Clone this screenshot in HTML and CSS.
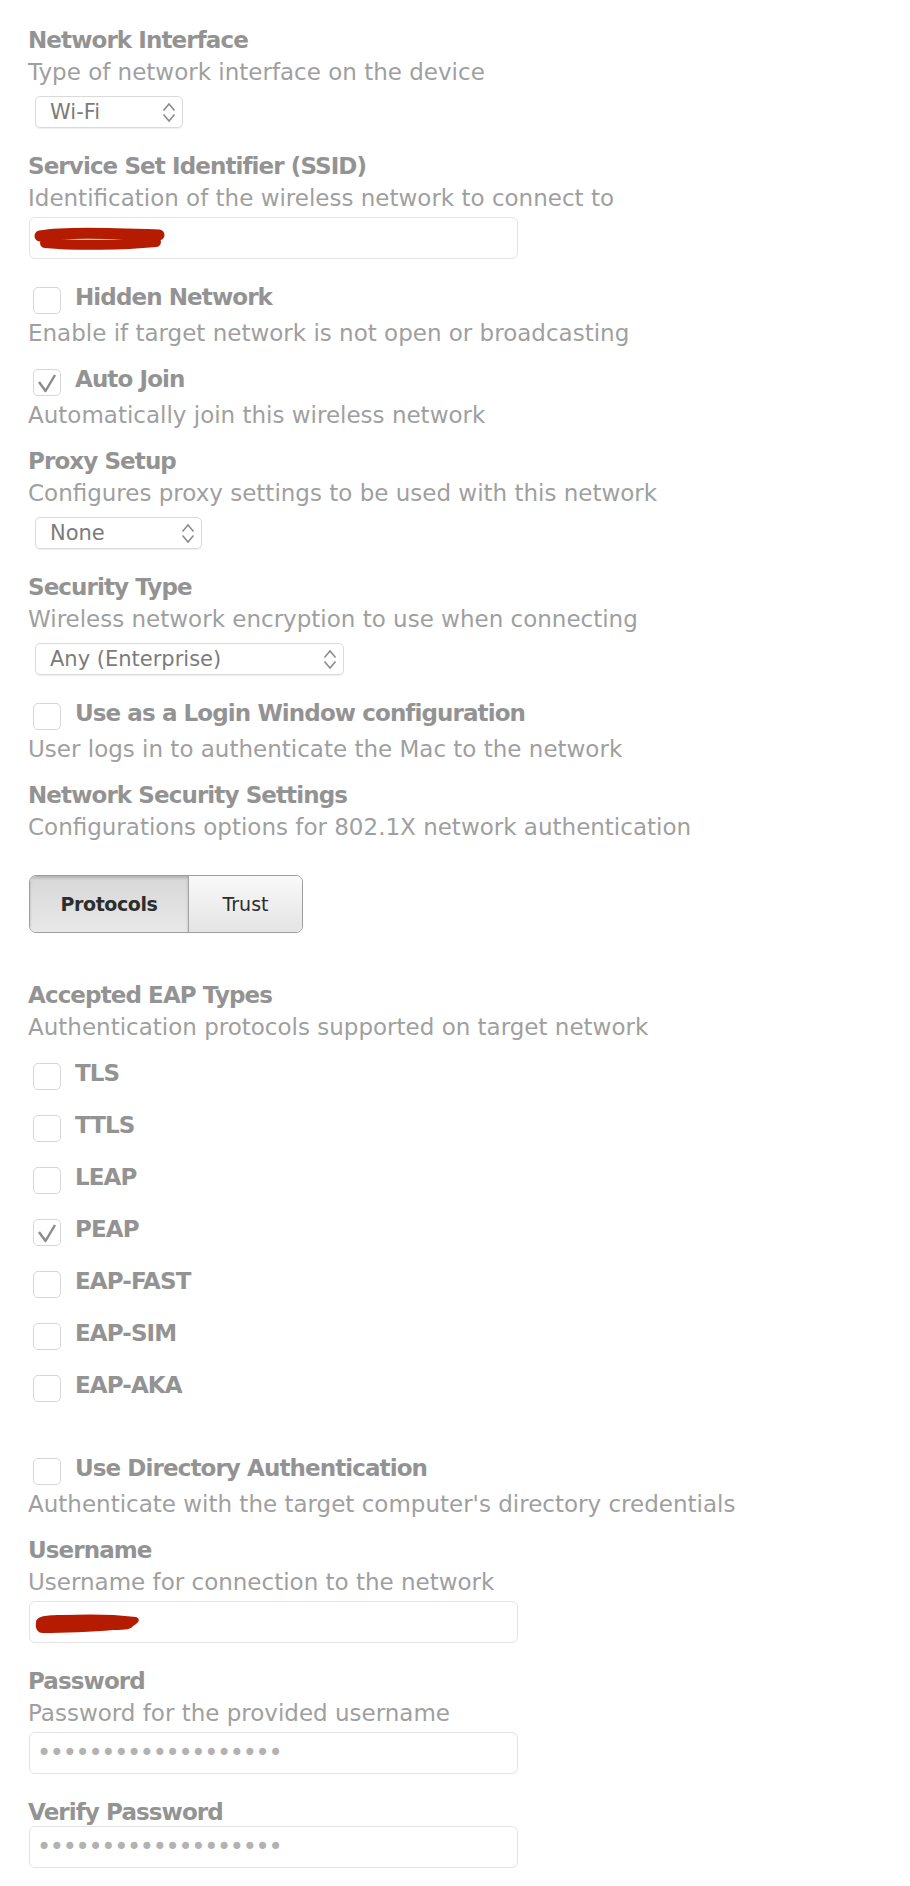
FILE: index.html
```html
<!DOCTYPE html>
<html lang="en">
<head>
  <meta charset="UTF-8">
  <title>Network Payload</title>
  <link rel="stylesheet" href="styles.css">
</head>
<body>

  <div class="field">
    <div class="field-title">Network Interface</div>
    <div class="field-desc">Type of network interface on the device</div>
    <div class="select-box select-small">
      <span>Wi-Fi</span>
      <svg class="arrows" width="14" height="21" viewBox="0 0 14 21"><path d="M1.5 8.5 L7 2 L12.5 8.5 M1.5 12.5 L7 19 L12.5 12.5"/></svg>
    </div>
  </div>

  <div class="field">
    <div class="field-title">Service Set Identifier (SSID)</div>
    <div class="field-desc">Identification of the wireless network to connect to</div>
    <div class="textbox">
      <svg class="redact" width="132" height="34" viewBox="0 0 132 34">
        <path d="M7 15 C30 11 70 12 126 14" stroke-width="11"/>
        <path d="M12 22 C45 25 90 24 123 21" stroke-width="10"/>
      </svg>
    </div>
  </div>

  <div class="field">
    <div class="check-row">
      <span class="checkbox"></span>
      <span class="check-label">Hidden Network</span>
    </div>
    <div class="field-desc">Enable if target network is not open or broadcasting</div>
  </div>

  <div class="field">
    <div class="check-row">
      <span class="checkbox"><svg viewBox="0 0 26 25"><path d="M5 12 L11.5 21 L21 5"/></svg></span>
      <span class="check-label">Auto Join</span>
    </div>
    <div class="field-desc">Automatically join this wireless network</div>
  </div>

  <div class="field">
    <div class="field-title">Proxy Setup</div>
    <div class="field-desc">Configures proxy settings to be used with this network</div>
    <div class="select-box select-medium">
      <span>None</span>
      <svg class="arrows" width="14" height="21" viewBox="0 0 14 21"><path d="M1.5 8.5 L7 2 L12.5 8.5 M1.5 12.5 L7 19 L12.5 12.5"/></svg>
    </div>
  </div>

  <div class="field">
    <div class="field-title">Security Type</div>
    <div class="field-desc">Wireless network encryption to use when connecting</div>
    <div class="select-box select-wide">
      <span>Any (Enterprise)</span>
      <svg class="arrows" width="14" height="21" viewBox="0 0 14 21"><path d="M1.5 8.5 L7 2 L12.5 8.5 M1.5 12.5 L7 19 L12.5 12.5"/></svg>
    </div>
  </div>

  <div class="field">
    <div class="check-row">
      <span class="checkbox"></span>
      <span class="check-label">Use as a Login Window configuration</span>
    </div>
    <div class="field-desc">User logs in to authenticate the Mac to the network</div>
  </div>

  <div class="field">
    <div class="field-title">Network Security Settings</div>
    <div class="field-desc">Configurations options for 802.1X network authentication</div>
  </div>

  <div class="segmented">
    <div class="segment active">Protocols</div>
    <div class="segment">Trust</div>
  </div>

  <div class="field">
    <div class="field-title">Accepted EAP Types</div>
    <div class="field-desc">Authentication protocols supported on target network</div>
  </div>

  <div class="eap-list">
    <div class="check-row"><span class="checkbox"></span><span class="check-label">TLS</span></div>
    <div class="check-row"><span class="checkbox"></span><span class="check-label">TTLS</span></div>
    <div class="check-row"><span class="checkbox"></span><span class="check-label">LEAP</span></div>
    <div class="check-row"><span class="checkbox"><svg viewBox="0 0 26 25"><path d="M5 12 L11.5 21 L21 5"/></svg></span><span class="check-label">PEAP</span></div>
    <div class="check-row"><span class="checkbox"></span><span class="check-label">EAP-FAST</span></div>
    <div class="check-row"><span class="checkbox"></span><span class="check-label">EAP-SIM</span></div>
    <div class="check-row"><span class="checkbox"></span><span class="check-label">EAP-AKA</span></div>
  </div>

  <div class="field">
    <div class="check-row">
      <span class="checkbox"></span>
      <span class="check-label">Use Directory Authentication</span>
    </div>
    <div class="field-desc">Authenticate with the target computer's directory credentials</div>
  </div>

  <div class="field">
    <div class="field-title">Username</div>
    <div class="field-desc">Username for connection to the network</div>
    <div class="textbox">
      <svg class="redact" width="110" height="34" viewBox="0 0 110 34">
        <path class="blob" d="M3 17 C4 11 12 10 30 10 C55 9 80 9 103 12 C108 14 106 18 100 21 C98 24 94 25 80 25 C60 27 30 28 10 28 C4 28 2 23 3 17 Z"/>
      </svg>
    </div>
  </div>

  <div class="field">
    <div class="field-title">Password</div>
    <div class="field-desc">Password for the provided username</div>
    <div class="textbox">
      <span class="dots">•••••••••••••••••••</span>
    </div>
  </div>

  <div class="field">
    <div class="field-title">Verify Password</div>
    <div class="textbox tight">
      <span class="dots">•••••••••••••••••••</span>
    </div>
  </div>

</body>
</html>
```

FILE: styles.css
```css
body {
  margin: 0;
  padding: 24px 0 0 28px;
  background: #ffffff;
  font-family: "DejaVu Sans", sans-serif;
}

.field {
  display: flow-root;
  margin-bottom: 14px;
}

.field:last-child {
  margin-bottom: 0;
}

.field-title,
.check-label {
  font-size: 23px;
  line-height: 32px;
  font-weight: bold;
  letter-spacing: -0.9px;
  color: #939393;
}

.field-desc {
  font-size: 23px;
  line-height: 32px;
  color: #9f9f9f;
}

/* popup menus */
.select-box {
  display: flex;
  align-items: center;
  justify-content: space-between;
  box-sizing: border-box;
  height: 32px;
  margin: 8px 0 8px 7px;
  padding: 0 6px 0 14px;
  border: 1px solid #dadada;
  border-radius: 5px;
  box-shadow: 0 1px 1px rgba(0, 0, 0, 0.07);
  font-size: 21px;
  color: #7b7b7b;
}

.select-small {
  width: 148px;
}

.select-medium {
  width: 167px;
}

.select-wide {
  width: 309px;
}

.arrows path {
  fill: none;
  stroke: #8c8c8c;
  stroke-width: 1.6;
}

/* text fields */
.textbox {
  display: flex;
  align-items: center;
  box-sizing: border-box;
  width: 489px;
  height: 42px;
  margin: 3px 0 8px 1px;
  padding-left: 3px;
  border: 1px solid #e3e3e3;
  border-radius: 6px;
}

.textbox.tight {
  margin-top: -2px;
}

.field:last-child .textbox {
  margin-bottom: 0;
}

.redact {
  display: block;
}

.redact path {
  fill: none;
  stroke: #b51b00;
  stroke-linecap: round;
}

.redact .blob {
  fill: #b51b00;
  stroke: none;
}

.dots {
  padding-left: 4px;
  font-size: 24px;
  letter-spacing: -1.3px;
  color: #b2b2b2;
}

/* checkboxes */
.check-row {
  display: flex;
  align-items: flex-start;
  height: 36px;
}

.checkbox {
  flex: none;
  box-sizing: border-box;
  width: 28px;
  height: 27px;
  margin: 6px 14px 0 5px;
  border: 1px solid #d7d7d7;
  border-radius: 5px;
  background: #fff;
}

.checkbox svg {
  display: block;
  width: 26px;
  height: 25px;
}

.checkbox path {
  fill: none;
  stroke: #8a8a8a;
  stroke-width: 2.4;
  stroke-linejoin: round;
}

/* protocols / trust tabs */
.segmented {
  display: flex;
  width: max-content;
  box-sizing: border-box;
  height: 58px;
  margin: 32px 0 46px 1px;
  border: 1px solid #9d9d9d;
  border-radius: 7px;
  overflow: hidden;
  font-size: 19px;
  color: #2d2d2d;
}

.segment {
  display: flex;
  align-items: center;
  justify-content: center;
  width: 113px;
  background: linear-gradient(#f9f9f9, #e4e4e4);
  border-left: 1px solid #a3a3a3;
}

.segment.active {
  width: 158px;
  border-left: none;
  font-weight: bold;
  letter-spacing: -0.4px;
  background: linear-gradient(#d7d7d7, #e8e8e8);
  box-shadow: inset 0 2px 3px rgba(0, 0, 0, 0.18);
}

.eap-list {
  display: flex;
  flex-direction: column;
  gap: 16px;
  margin-bottom: 47px;
}
```
